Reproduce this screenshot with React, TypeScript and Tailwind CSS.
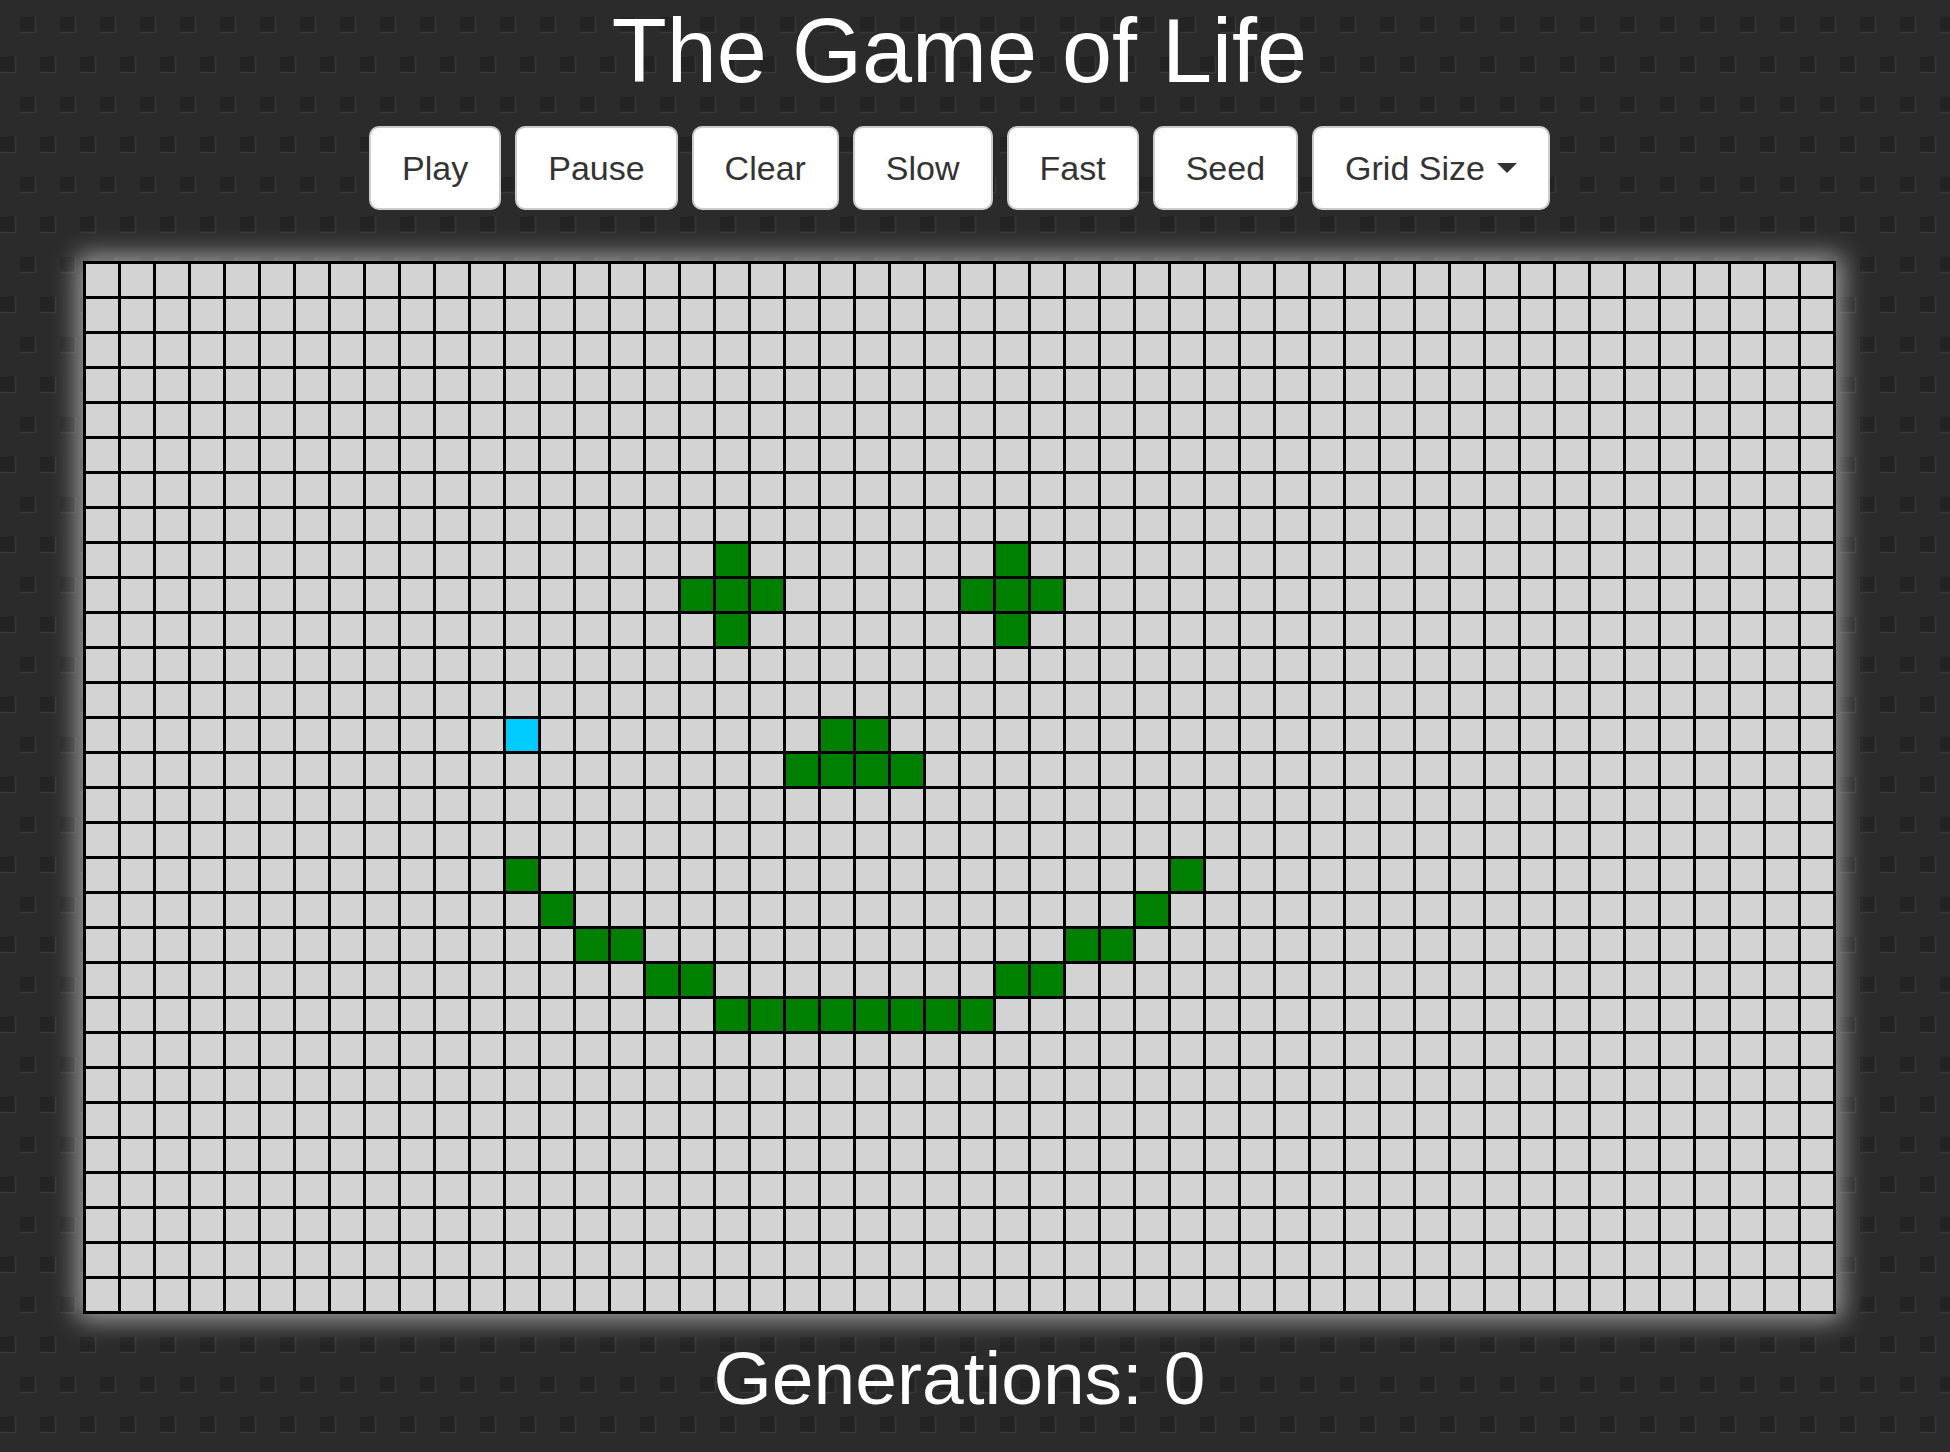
import React from "react";

const COLS = 50;
const ROWS = 30;

const LIVE: Record<number, number[]> = {
  8: [18, 26],
  9: [17, 18, 19, 25, 26, 27],
  10: [18, 26],
  13: [21, 22],
  14: [20, 21, 22, 23],
  17: [12, 31],
  18: [13, 30],
  19: [14, 15, 28, 29],
  20: [16, 17, 26, 27],
  21: [18, 19, 20, 21, 22, 23, 24, 25],
};

const SELECTED = { row: 13, col: 12 };

const buttons = ["Play", "Pause", "Clear", "Slow", "Fast", "Seed"];

function Background() {
  return (
    <svg className="absolute inset-0 w-full h-full -z-10" aria-hidden="true">
      <defs>
        <pattern id="dots" width="40" height="80" patternUnits="userSpaceOnUse">
          <rect width="40" height="80" fill="#2b2b2b" />
          <rect x="20" y="17" width="15" height="15" fill="#232323" />
          <path d="M35.5 17v15.5H20" fill="none" stroke="#383838" strokeWidth="1.5" />
          <rect x="0" y="57" width="15" height="15" fill="#232323" />
          <path d="M15.5 57v15.5H0" fill="none" stroke="#383838" strokeWidth="1.5" />
        </pattern>
      </defs>
      <rect width="100%" height="100%" fill="url(#dots)" />
    </svg>
  );
}

function Cell({ row, col }: { row: number; col: number }) {
  let color = "bg-[#d3d3d3]";
  if (row === SELECTED.row && col === SELECTED.col) color = "bg-[#00ccff]";
  else if (LIVE[row]?.includes(col)) color = "bg-[#008000]";
  return <div className={`w-[32px] h-[32px] ${color}`} />;
}

export default function App() {
  const cells = [];
  for (let r = 0; r < ROWS; r++) {
    for (let c = 0; c < COLS; c++) {
      cells.push(<Cell key={`${r}-${c}`} row={r} col={c} />);
    }
  }

  return (
    <main
      className="relative isolate min-h-screen pr-[31px] flex flex-col items-center text-white"
      style={{ fontFamily: '"Liberation Sans", Arial, sans-serif' }}
    >
      <Background />
      <h1 className="text-[90px] leading-[103px] font-normal">The Game of Life</h1>

      <div className="mt-[23px] flex gap-[14px]">
        {buttons.map((b) => (
          <button
            key={b}
            className="bg-white text-[#333] text-[34px] leading-[44px] px-[31px] py-[18px] border-2 border-[#cccccc] rounded-[10px]"
          >
            {b}
          </button>
        ))}
        <button className="bg-white text-[#333] text-[34px] leading-[44px] px-[31px] py-[18px] border-2 border-[#cccccc] rounded-[10px] flex items-center">
          Grid Size
          <span className="ml-[12px] w-0 h-0 border-x-[10px] border-x-transparent border-t-[10px] border-t-[#333]" />
        </button>
      </div>

      <div className="mt-[51px] bg-black p-[3px] shadow-[0_0_24px_6px_rgba(255,255,255,0.55)]">
        <div className="grid grid-cols-[repeat(50,32px)] gap-[3px]">{cells}</div>
      </div>

      <h2 className="mt-[21px] text-[75px] leading-[86px] font-normal">Generations: 0</h2>
    </main>
  );
}
